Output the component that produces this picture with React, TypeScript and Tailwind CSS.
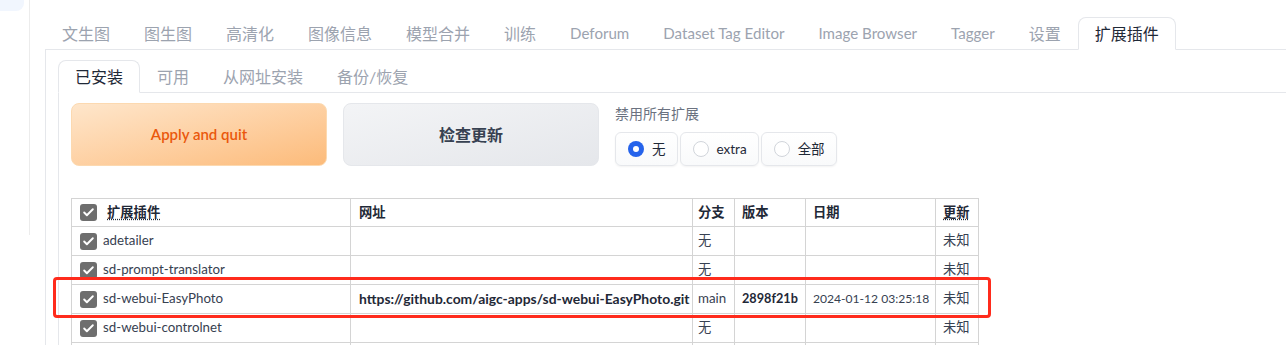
import { Check } from "lucide-react";

const topTabs = [
  "文生图",
  "图生图",
  "高清化",
  "图像信息",
  "模型合并",
  "训练",
  "Deforum",
  "Dataset Tag Editor",
  "Image Browser",
  "Tagger",
  "设置",
  "扩展插件",
];

const subTabs = ["已安装", "可用", "从网址安装", "备份/恢复"];

const rows = [
  { name: "adetailer", url: "", branch: "无", version: "", date: "" },
  { name: "sd-prompt-translator", url: "", branch: "无", version: "", date: "" },
  {
    name: "sd-webui-EasyPhoto",
    url: "https://github.com/aigc-apps/sd-webui-EasyPhoto.git",
    branch: "main",
    version: "2898f21b",
    date: "2024-01-12 03:25:18",
  },
  { name: "sd-webui-controlnet", url: "", branch: "无", version: "", date: "" },
  { name: "", url: "", branch: "", version: "", date: "" },
];

const Box = () => (
  <span className="flex h-[17px] w-[17px] shrink-0 items-center justify-center rounded-[3px] bg-[#6e6e6e]">
    <Check size={13} strokeWidth={3.5} className="text-white" />
  </span>
);

const Radio = ({ label, checked }: { label: string; checked?: boolean }) => (
  <label className="flex h-[34px] items-center gap-2 rounded-md border border-[#e5e7eb] bg-gradient-to-b from-white to-[#f9fafb] pl-3 pr-[11px] text-[13.5px] text-[#1f2937] shadow-[0_1px_2px_rgba(0,0,0,0.05)]">
    {checked ? (
      <span className="flex h-4 w-4 items-center justify-center rounded-full bg-[#2563eb]">
        <span className="h-[6px] w-[6px] rounded-full bg-white" />
      </span>
    ) : (
      <span className="h-4 w-4 rounded-full border border-[#d1d5db] bg-white" />
    )}
    <span>{label}</span>
  </label>
);

const isLatin = (t: string) => /^[A-Za-z ]+$/.test(t);

export default function App() {
  return (
    <div className="relative flex h-[345px] w-[1286px] overflow-hidden bg-white font-['Lato','Noto_Sans_CJK_SC',sans-serif]">
      {/* sidebar edge */}
      <div className="flex w-[30px] shrink-0 flex-col">
        <div className="h-[235px] border-r border-[#ececec]">
          <div className="h-[11px] w-[24px] rounded-br-lg bg-[#f1f6fe]" />
        </div>
      </div>

      <div className="ml-[15px] flex w-[1260px] shrink-0 flex-col">
        {/* bottoms of the inputs above */}
        <div className="flex h-[2px]">
          <div className="ml-[5px] w-[327px] rounded-b bg-white shadow-[0_1px_3px_rgba(0,0,0,0.18)]" />
          <div className="ml-[21px] w-[29px] rounded-b bg-white shadow-[0_1px_3px_rgba(0,0,0,0.18)]" />
          <div className="ml-[21px] w-[327px] rounded-b bg-white shadow-[0_1px_3px_rgba(0,0,0,0.18)]" />
          <div className="ml-[23px] w-[25px] rounded-b bg-white shadow-[0_1px_3px_rgba(0,0,0,0.18)]" />
          <div className="ml-[425px] w-[60px] rounded-b bg-white shadow-[0_1px_3px_rgba(0,0,0,0.18)]" />
        </div>

        {/* top tabs */}
        <div className="mt-[17px] flex h-[33px] border-b border-[#e5e7eb]">
          {topTabs.map((t, i) => {
            const active = i === topTabs.length - 1;
            return (
              <div
                key={t}
                className={`-mb-px flex h-[33px] items-center whitespace-nowrap rounded-t-lg border px-4 ${
                  isLatin(t) ? "text-[15.1px]" : "text-base"
                } ${
                  active
                    ? "border-[#e5e7eb] border-b-white bg-white text-[#1f2937]"
                    : "border-transparent text-[#9ca3af]"
                }`}
              >
                {t}
              </div>
            );
          })}
        </div>

        {/* tab panel */}
        <div className="flex flex-1 flex-col border-l border-[#e5e7eb] pl-3 pt-[10px]">
          <div className="flex h-[33px] border-b border-[#e5e7eb]">
            {subTabs.map((t, i) => (
              <div
                key={t}
                className={`-mb-px flex h-[33px] items-center whitespace-nowrap rounded-t-lg border px-4 text-base ${
                  i === 0
                    ? "border-[#e5e7eb] border-b-white bg-white text-[#1f2937]"
                    : "border-transparent text-[#9ca3af]"
                }`}
              >
                {t}
              </div>
            ))}
          </div>

          <div className="flex flex-1 flex-col border-l border-[#e5e7eb] pl-3 pt-[10px]">
            <div className="flex gap-4">
              <button className="flex h-[63px] w-[256px] items-center justify-center rounded-lg border border-[#fcd9b0] bg-gradient-to-br from-[#fee6cb] to-[#fcbb7a] text-[15px] font-semibold text-[#ea580c]">
                Apply and quit
              </button>
              <button className="flex h-[63px] w-[256px] items-center justify-center rounded-lg border border-[#e5e7eb] bg-gradient-to-br from-[#f3f4f6] to-[#e5e7eb] text-base font-bold text-[#374151]">
                检查更新
              </button>
              <div className="flex flex-col">
                <span className="mt-[1px] text-sm text-[#6b7280]">禁用所有扩展</span>
                <div className="mt-[8px] flex gap-[2px]">
                  <Radio label="无" checked />
                  <Radio label="extra" />
                  <Radio label="全部" />
                </div>
              </div>
            </div>

            <table className="mt-[32px] w-[907px] table-fixed border-collapse text-[13.3px] text-[#374151]">
              <colgroup>
                <col className="w-[279px]" />
                <col className="w-[342px]" />
                <col className="w-[42px]" />
                <col className="w-[71px]" />
                <col className="w-[130px]" />
                <col className="w-[43px]" />
              </colgroup>
              <thead>
                <tr className="h-[28px] font-bold text-[#1f2937]">
                  <th className="border border-[#d4d4d4] px-2 text-left">
                    <div className="flex items-center gap-[10px]">
                      <Box />
                      <span className="underline decoration-dotted underline-offset-2">扩展插件</span>
                    </div>
                  </th>
                  <th className="border border-[#d4d4d4] px-2 text-left">网址</th>
                  <th className="border border-[#d4d4d4] px-[5px] text-left">分支</th>
                  <th className="border border-[#d4d4d4] px-[7px] text-left">版本</th>
                  <th className="border border-[#d4d4d4] px-[7px] text-left">日期</th>
                  <th className="border border-[#d4d4d4] px-[7px] text-left">
                    <span className="underline decoration-dotted underline-offset-2">更新</span>
                  </th>
                </tr>
              </thead>
              <tbody>
                {rows.map((r, i) => (
                  <tr key={i} className="h-[29px]">
                    <td className="border border-[#d4d4d4] px-2">
                      {r.name && (
                        <div className="flex items-center gap-[6px]">
                          <Box />
                          <span>{r.name}</span>
                        </div>
                      )}
                    </td>
                    <td className="whitespace-nowrap border border-[#d4d4d4] px-2 text-[13.9px] font-bold text-[#1f2937]">{r.url}</td>
                    <td className="border border-[#d4d4d4] px-[5px]">{r.branch}</td>
                    <td className="border border-[#d4d4d4] px-[7px] text-[12.7px] font-bold text-[#1f2937]">{r.version}</td>
                    <td className="whitespace-nowrap border border-[#d4d4d4] px-[7px] text-[12.1px]">{r.date}</td>
                    <td className="border border-[#d4d4d4] px-[7px]">{r.name ? "未知" : ""}</td>
                  </tr>
                ))}
              </tbody>
            </table>
          </div>
        </div>
      </div>

      {/* annotation */}
      <div className="absolute left-[53px] top-[277px] h-[41px] w-[938px] rounded-[4px] border-[3px] border-[#ff2b1c]" />
    </div>
  );
}
